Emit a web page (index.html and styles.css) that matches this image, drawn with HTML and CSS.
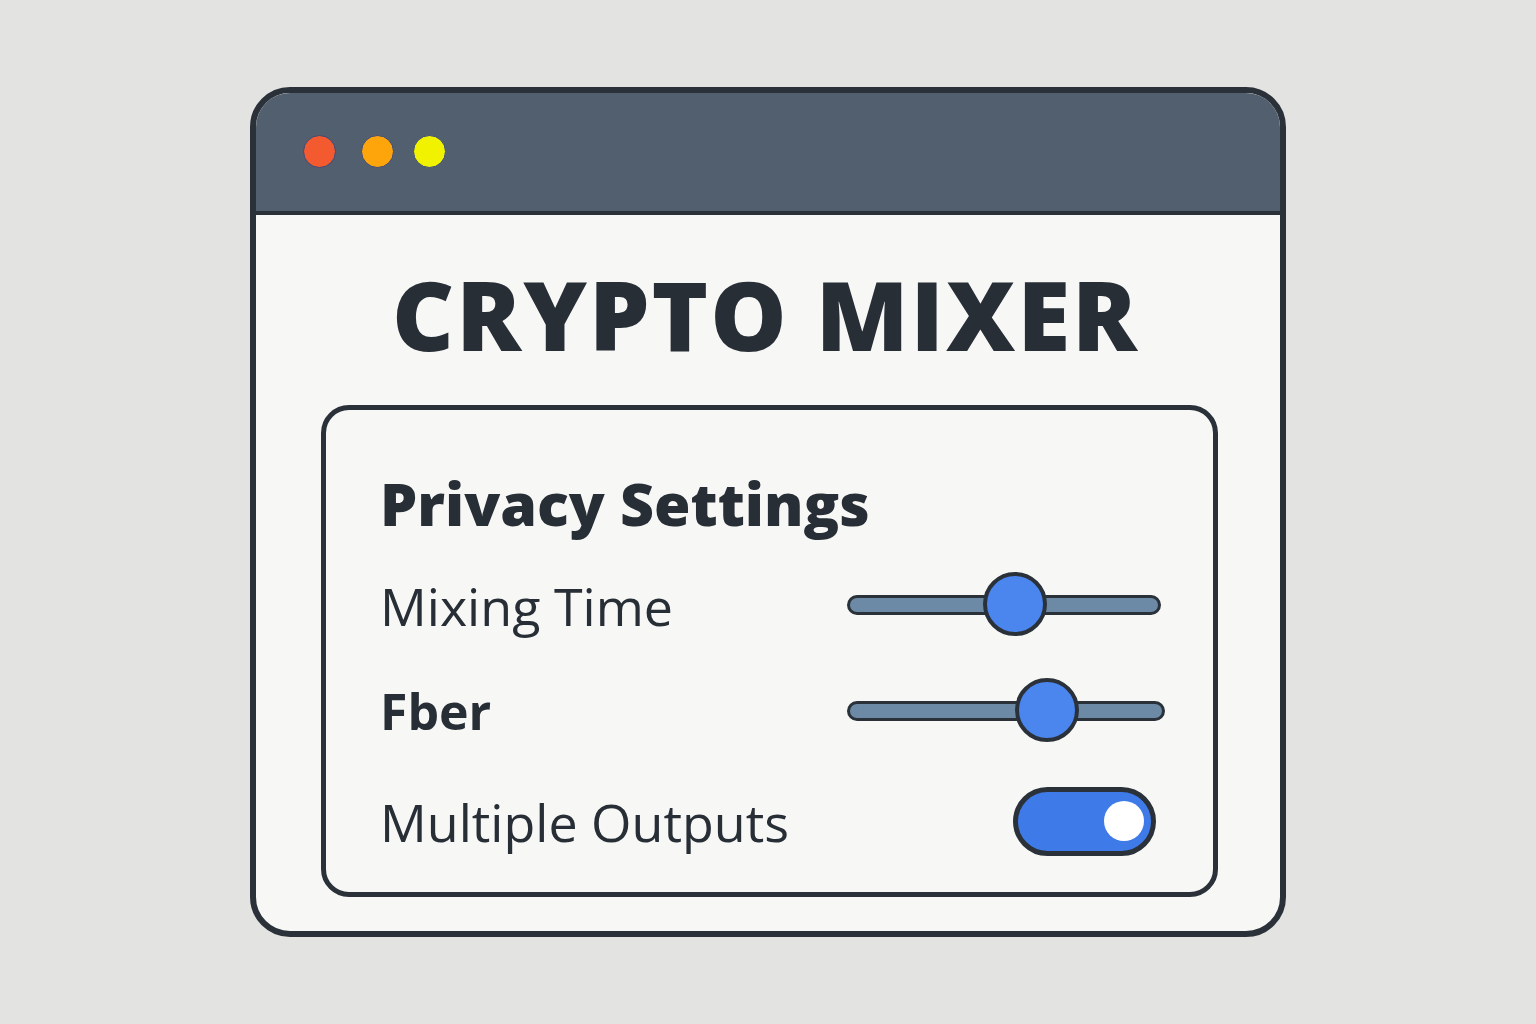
FILE: index.html
```html
<!DOCTYPE html>
<html>
<head>
	<meta charset="UTF-8">
	<title>Crypto Mixer</title>
	<link rel="stylesheet" href="styles.css">
</head>
<body>
<div class="window">
	<div class="titlebar">
		<span class="dot red"></span>
		<span class="dot orange"></span>
		<span class="dot yellow"></span>
	</div>
	<div class="content">
		<h1 class="title">CRYPTO MIXER</h1>
		<div class="panel">
			<h2 class="heading">Privacy Settings</h2>
			<div class="row">
				<span class="label">Mixing Time</span>
				<div class="slider slider-time">
					<div class="track"></div>
					<div class="thumb" style="left: 136px"></div>
				</div>
			</div>
			<div class="row">
				<span class="label bold">Fber</span>
				<div class="slider slider-fee">
					<div class="track"></div>
					<div class="thumb" style="left: 168px"></div>
				</div>
			</div>
			<div class="row row-last">
				<span class="label">Multiple Outputs</span>
				<div class="toggle">
					<div class="knob"></div>
				</div>
			</div>
		</div>
	</div>
</div>
</body>
</html>
```

FILE: styles.css
```css
body {
	margin: 0;
	height: 1024px;
	background: #e3e3e1;
	display: flex;
	align-items: center;
	justify-content: center;
	font-family: "Open Sans", "Liberation Sans", sans-serif;
	color: #272e35;
}
.window {
	width: 1024px;
	height: 838px;
	border: 6px solid #2a3139;
	border-radius: 40px;
	background: #f7f7f6;
	overflow: hidden;
	display: flex;
	flex-direction: column;
}
.titlebar {
	height: 116px;
	background: #525f6e;
	border-bottom: 4px solid #2a3139;
	display: flex;
	align-items: center;
	padding-left: 47px;
	gap: 22px;
	padding-bottom: 2px;
}
.dot {
	width: 31px;
	height: 31px;
	border-radius: 50%;
	border: 1px solid #3b4a7a;
}
.dot.red { background: #f35a30; }
.dot.orange { background: #fda50a; margin-left: 3px; }
.dot.yellow { background: #f1f200; margin-left: -3px; }
.content {
	flex: 1;
	display: flex;
	flex-direction: column;
	padding: 0 62px 34px 65px;
}
.title {
	box-sizing: border-box;
	margin: 0;
	height: 190px;
	padding: 6px 8px 0 0;
	display: flex;
	align-items: center;
	justify-content: center;
	font-size: 96px;
	font-weight: 800;
	letter-spacing: 2px;
}
.panel {
	flex: 1;
	border: 5px solid #2a3139;
	border-radius: 28px;
	padding: 53px 52px 0 57px;
	display: flex;
	flex-direction: column;
}
.heading {
	margin: 0 0 9px;
	font-size: 59px;
	font-weight: 800;
	line-height: 80px;
	margin-left: -3px;
}
.row {
	height: 106px;
	display: flex;
	align-items: center;
	justify-content: space-between;
}
.row-last {
	height: 112px;
	padding-top: 1px;
}
.label {
	font-size: 52px;
	font-weight: 400;
	margin-left: -3px;
}
.label.bold {
	font-weight: 700;
	font-size: 50px;
}
.slider {
	position: relative;
	width: 314px;
	height: 66px;
}
.slider-fee {
	width: 318px;
	margin-right: -4px;
}
.track {
	position: absolute;
	left: 0;
	right: 0;
	top: 23px;
	height: 14px;
	border: 3px solid #2a3139;
	border-radius: 10px;
	background: #6c8aa5;
}
.thumb {
	position: absolute;
	top: 0;
	width: 56px;
	height: 56px;
	border: 4px solid #2a3139;
	border-radius: 50%;
	background: #4a86ee;
}
.toggle {
	box-sizing: border-box;
	width: 143px;
	height: 69px;
	border: 5px solid #2a3139;
	border-radius: 35px;
	background: #3f7be8;
	display: flex;
	align-items: center;
	justify-content: flex-end;
	padding-right: 7px;
	margin-right: 5px;
}
.knob {
	width: 40px;
	height: 40px;
	border-radius: 50%;
	background: #ffffff;
}
```
